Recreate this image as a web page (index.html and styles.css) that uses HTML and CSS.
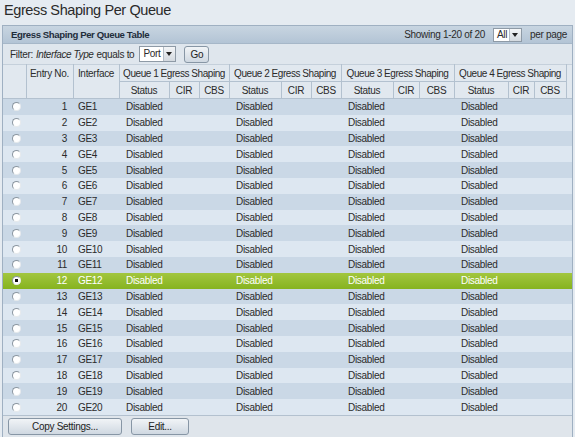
FILE: index.html
```html
<!DOCTYPE html>
<html>
<head>
<meta charset="utf-8">
<link rel="stylesheet" href="styles.css">
</head>
<body>
<h1 class="title">Egress Shaping Per Queue</h1>
<div class="panel">
  <div class="panel-head">
    <span class="panel-title">Egress Shaping Per Queue Table</span>
    <span class="paging">Showing 1-20 of 20 <span class="sel sel-all"><span class="sel-text">All</span><span class="sel-btn"></span></span> per page</span>
  </div>
  <div class="filter">
    <span>Filter:</span>
    <span class="it">Interface Type</span>
    <span>equals to</span>
    <span class="sel sel-port"><span class="sel-text">Port</span><span class="sel-btn"></span></span>
    <span class="btn btn-go">Go</span>
  </div>
  <table class="grid">
    <colgroup>
      <col class="c-radio"><col class="c-entry"><col class="c-if">
      <col class="c-st1"><col class="c-cir1"><col class="c-cbs1">
      <col class="c-st2"><col class="c-cir2"><col class="c-cbs2">
      <col class="c-st3"><col class="c-cir3"><col class="c-cbs3">
      <col class="c-st4"><col class="c-cir4"><col class="c-cbs4">
      <col class="c-end">
    </colgroup>
    <thead>
      <tr class="h1">
        <th rowspan="2"></th>
        <th rowspan="2" class="top">Entry No.</th>
        <th rowspan="2" class="top">Interface</th>
        <th colspan="3" class="q">Queue 1 Egress Shaping</th>
        <th colspan="3" class="q">Queue 2 Egress Shaping</th>
        <th colspan="3" class="q">Queue 3 Egress Shaping</th>
        <th colspan="3" class="q">Queue 4 Egress Shaping</th>
        <th rowspan="2"></th>
      </tr>
      <tr class="h2">
        <th>Status</th><th>CIR</th><th>CBS</th>
        <th>Status</th><th>CIR</th><th>CBS</th>
        <th>Status</th><th>CIR</th><th>CBS</th>
        <th>Status</th><th>CIR</th><th>CBS</th>
      </tr>
    </thead>
    <tbody>
      <tr class="odd"><td><span class="radio"></span></td><td class="num">1</td><td class="if">GE1</td><td class="st">Disabled</td><td></td><td></td><td class="st">Disabled</td><td></td><td></td><td class="st">Disabled</td><td></td><td></td><td class="st">Disabled</td><td></td><td></td><td></td></tr>
      <tr class="even"><td><span class="radio"></span></td><td class="num">2</td><td class="if">GE2</td><td class="st">Disabled</td><td></td><td></td><td class="st">Disabled</td><td></td><td></td><td class="st">Disabled</td><td></td><td></td><td class="st">Disabled</td><td></td><td></td><td></td></tr>
      <tr class="odd"><td><span class="radio"></span></td><td class="num">3</td><td class="if">GE3</td><td class="st">Disabled</td><td></td><td></td><td class="st">Disabled</td><td></td><td></td><td class="st">Disabled</td><td></td><td></td><td class="st">Disabled</td><td></td><td></td><td></td></tr>
      <tr class="even"><td><span class="radio"></span></td><td class="num">4</td><td class="if">GE4</td><td class="st">Disabled</td><td></td><td></td><td class="st">Disabled</td><td></td><td></td><td class="st">Disabled</td><td></td><td></td><td class="st">Disabled</td><td></td><td></td><td></td></tr>
      <tr class="odd"><td><span class="radio"></span></td><td class="num">5</td><td class="if">GE5</td><td class="st">Disabled</td><td></td><td></td><td class="st">Disabled</td><td></td><td></td><td class="st">Disabled</td><td></td><td></td><td class="st">Disabled</td><td></td><td></td><td></td></tr>
      <tr class="even"><td><span class="radio"></span></td><td class="num">6</td><td class="if">GE6</td><td class="st">Disabled</td><td></td><td></td><td class="st">Disabled</td><td></td><td></td><td class="st">Disabled</td><td></td><td></td><td class="st">Disabled</td><td></td><td></td><td></td></tr>
      <tr class="odd"><td><span class="radio"></span></td><td class="num">7</td><td class="if">GE7</td><td class="st">Disabled</td><td></td><td></td><td class="st">Disabled</td><td></td><td></td><td class="st">Disabled</td><td></td><td></td><td class="st">Disabled</td><td></td><td></td><td></td></tr>
      <tr class="even"><td><span class="radio"></span></td><td class="num">8</td><td class="if">GE8</td><td class="st">Disabled</td><td></td><td></td><td class="st">Disabled</td><td></td><td></td><td class="st">Disabled</td><td></td><td></td><td class="st">Disabled</td><td></td><td></td><td></td></tr>
      <tr class="odd"><td><span class="radio"></span></td><td class="num">9</td><td class="if">GE9</td><td class="st">Disabled</td><td></td><td></td><td class="st">Disabled</td><td></td><td></td><td class="st">Disabled</td><td></td><td></td><td class="st">Disabled</td><td></td><td></td><td></td></tr>
      <tr class="even"><td><span class="radio"></span></td><td class="num">10</td><td class="if">GE10</td><td class="st">Disabled</td><td></td><td></td><td class="st">Disabled</td><td></td><td></td><td class="st">Disabled</td><td></td><td></td><td class="st">Disabled</td><td></td><td></td><td></td></tr>
      <tr class="odd"><td><span class="radio"></span></td><td class="num">11</td><td class="if">GE11</td><td class="st">Disabled</td><td></td><td></td><td class="st">Disabled</td><td></td><td></td><td class="st">Disabled</td><td></td><td></td><td class="st">Disabled</td><td></td><td></td><td></td></tr>
      <tr class="sel-row"><td><span class="radio on"></span></td><td class="num">12</td><td class="if">GE12</td><td class="st">Disabled</td><td></td><td></td><td class="st">Disabled</td><td></td><td></td><td class="st">Disabled</td><td></td><td></td><td class="st">Disabled</td><td></td><td></td><td></td></tr>
      <tr class="odd"><td><span class="radio"></span></td><td class="num">13</td><td class="if">GE13</td><td class="st">Disabled</td><td></td><td></td><td class="st">Disabled</td><td></td><td></td><td class="st">Disabled</td><td></td><td></td><td class="st">Disabled</td><td></td><td></td><td></td></tr>
      <tr class="even"><td><span class="radio"></span></td><td class="num">14</td><td class="if">GE14</td><td class="st">Disabled</td><td></td><td></td><td class="st">Disabled</td><td></td><td></td><td class="st">Disabled</td><td></td><td></td><td class="st">Disabled</td><td></td><td></td><td></td></tr>
      <tr class="odd"><td><span class="radio"></span></td><td class="num">15</td><td class="if">GE15</td><td class="st">Disabled</td><td></td><td></td><td class="st">Disabled</td><td></td><td></td><td class="st">Disabled</td><td></td><td></td><td class="st">Disabled</td><td></td><td></td><td></td></tr>
      <tr class="even"><td><span class="radio"></span></td><td class="num">16</td><td class="if">GE16</td><td class="st">Disabled</td><td></td><td></td><td class="st">Disabled</td><td></td><td></td><td class="st">Disabled</td><td></td><td></td><td class="st">Disabled</td><td></td><td></td><td></td></tr>
      <tr class="odd"><td><span class="radio"></span></td><td class="num">17</td><td class="if">GE17</td><td class="st">Disabled</td><td></td><td></td><td class="st">Disabled</td><td></td><td></td><td class="st">Disabled</td><td></td><td></td><td class="st">Disabled</td><td></td><td></td><td></td></tr>
      <tr class="even"><td><span class="radio"></span></td><td class="num">18</td><td class="if">GE18</td><td class="st">Disabled</td><td></td><td></td><td class="st">Disabled</td><td></td><td></td><td class="st">Disabled</td><td></td><td></td><td class="st">Disabled</td><td></td><td></td><td></td></tr>
      <tr class="odd"><td><span class="radio"></span></td><td class="num">19</td><td class="if">GE19</td><td class="st">Disabled</td><td></td><td></td><td class="st">Disabled</td><td></td><td></td><td class="st">Disabled</td><td></td><td></td><td class="st">Disabled</td><td></td><td></td><td></td></tr>
      <tr class="even"><td><span class="radio"></span></td><td class="num">20</td><td class="if">GE20</td><td class="st">Disabled</td><td></td><td></td><td class="st">Disabled</td><td></td><td></td><td class="st">Disabled</td><td></td><td></td><td class="st">Disabled</td><td></td><td></td><td></td></tr>
    </tbody>
  </table>
  <div class="actions">
    <span class="btn btn-copy">Copy Settings...</span>
    <span class="btn btn-edit">Edit...</span>
  </div>
</div>
</body>
</html>
```
FILE: styles.css
```css
html, body {
  margin: 0;
  padding: 0;
  background: #e5ebf1;
  font-family: "Liberation Sans", Arial, sans-serif;
  font-size: 10px;
  letter-spacing: -0.3px;
  color: #2b2b2b;
}
.title {
  margin: 0;
  padding: 1px 0 0 4px;
  height: 24px;
  font-size: 14.5px;
  letter-spacing: -0.4px;
  font-weight: normal;
  line-height: 19px;
  color: #2a2a2a;
}
.panel {
  margin-left: 2px;
  width: 569px;
  border: 1px solid #9fb0c2;
  background: #dfe6ed;
}
.panel-head {
  height: 17px;
  display: flex;
  align-items: center;
  justify-content: space-between;
  padding: 0 5px 0 8px;
  background: linear-gradient(#c8d5e1, #b3c4d5);
  border-bottom: 1px solid #a6b7c8;
}
.panel-title {
  font-weight: bold;
  font-size: 9.6px;
  letter-spacing: -0.4px;
  color: #1f2d3b;
}
.paging {
  display: flex;
  align-items: center;
  gap: 6px;
  color: #2b2b2b;
}
.sel {
  display: inline-flex;
  align-items: center;
  height: 14px;
  background: #fff;
  border: 1px solid #8e9aa6;
  box-sizing: border-box;
}
.sel-text {
  flex: 1;
  padding-left: 3px;
  line-height: 12px;
}
.sel-btn {
  width: 11px;
  height: 12px;
  background: linear-gradient(#f3f5f7, #d3d9df);
  border-left: 1px solid #b5bec7;
  position: relative;
}
.sel-btn::after {
  content: "";
  position: absolute;
  left: 2px;
  top: 4px;
  border-left: 3.5px solid transparent;
  border-right: 3.5px solid transparent;
  border-top: 4px solid #222;
}
.sel-all { width: 29px; margin: 0 2px; }
.sel-port { width: 37px; height: 16px; }
.sel-port .sel-btn { height: 14px; }
.sel-port .sel-btn::after { top: 5px; }
.filter {
  height: 20px;
  display: flex;
  align-items: center;
  gap: 3px;
  padding-left: 7px;
  background: #dfe6ed;
}
.filter .it { font-style: italic; letter-spacing: -0.4px; }
.filter .sel-port { margin-left: 2px; }
.btn {
  display: inline-flex;
  align-items: center;
  justify-content: center;
  box-sizing: border-box;
  border: 1px solid #8796a5;
  border-radius: 3px;
  background: linear-gradient(#f1f4f7, #cfd8e1);
  color: #222;
  height: 16px;
}
.btn-go { width: 25px; margin-left: 5px; height: 17px; }
.grid {
  width: 100%;
  table-layout: fixed;
  border-collapse: collapse;
}
.c-radio { width: 23px; }
.c-entry { width: 47px; }
.c-if { width: 46px; }
.c-st1 { width: 50px; }
.c-cir1 { width: 30px; }
.c-cbs1 { width: 30px; }
.c-st2 { width: 52px; }
.c-cir2 { width: 30px; }
.c-cbs2 { width: 30px; }
.c-st3 { width: 52px; }
.c-cir3 { width: 26px; }
.c-cbs3 { width: 35px; }
.c-st4 { width: 54px; }
.c-cir4 { width: 26px; }
.c-cbs4 { width: 32px; }
.c-end { width: 6px; }
.grid th {
  font-weight: normal;
  color: #2b2b2b;
  background: #e1e8ef;
  border: 1px solid #b3c1cf;
  padding: 0;
  white-space: nowrap;
  overflow: hidden;
}
.grid th.q { letter-spacing: -0.45px; }
.grid thead tr.h1 th { height: 16px; }
.grid thead tr.h2 th { height: 16px; }
.grid th.top { vertical-align: top; padding-top: 3px; }
.grid thead tr:first-child th { border-top-color: #c5d0db; }
.grid th:first-child { border-left: none; }
.grid th:last-child { border-right: none; }
.grid td {
  height: 15.8px;
  padding: 0;
  white-space: nowrap;
  overflow: hidden;
}
.grid tr.odd td { background: #cad8e6; }
.grid tr.even td { background: #dde7f1; }
.grid tr.sel-row td {
  background: linear-gradient(#a2c63f, #86b31f);
  color: #fff;
}
.grid td.num { text-align: right; padding-right: 6px; }
.grid td.if { padding-left: 5px; }
.grid td.st { padding-left: 7px; }
.radio {
  display: block;
  margin-left: 9px;
  width: 9px;
  height: 9px;
  box-sizing: border-box;
  border-radius: 50%;
  border: 1px solid #8b96a1;
  border-right-color: #e6e9ec;
  border-bottom-color: #e6e9ec;
  background: #fff;
}
.radio.on {
  background: radial-gradient(circle, #111 0 1.6px, #fff 2px);
}
.actions {
  height: 21px;
  display: flex;
  align-items: center;
  gap: 9px;
  padding-left: 5px;
  border-top: 1px solid #b3c1cf;
  background: #dfe5eb;
}
.btn-copy { width: 114px; height: 17px; }
.btn-edit { width: 58px; height: 17px; }
```
